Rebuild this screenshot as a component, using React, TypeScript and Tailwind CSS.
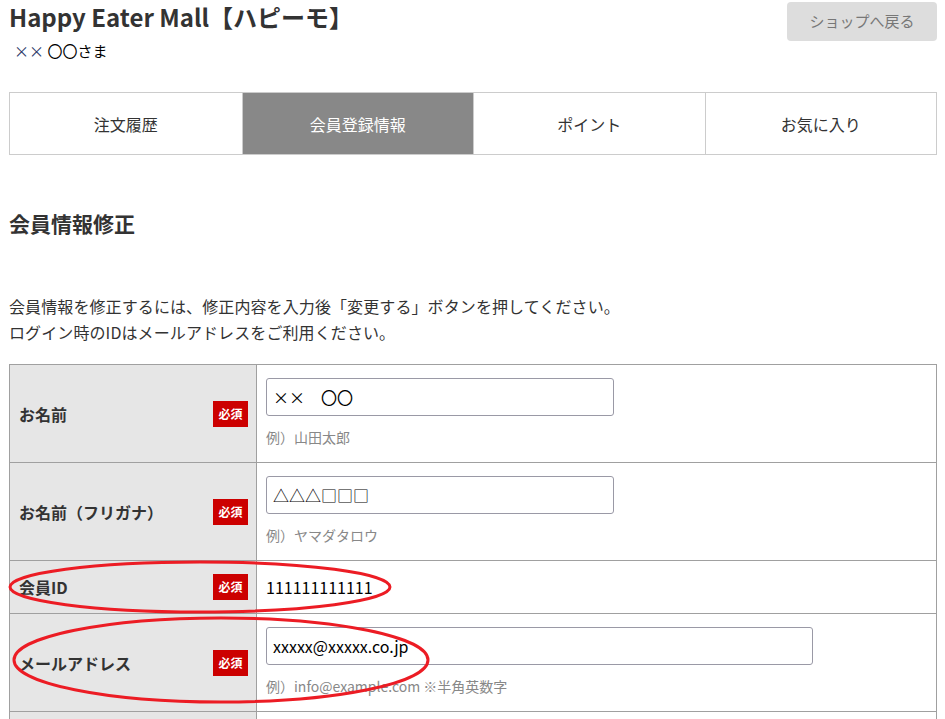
import React from "react";

const jp = "font-['Noto_Sans_CJK_JP',sans-serif]";

const tabs = ["注文履歴", "会員登録情報", "ポイント", "お気に入り"];

const Badge = () => (
  <span className="flex h-[26px] w-[35px] items-center justify-center bg-[#cc0000] text-[12px] text-white">
    必須
  </span>
);

const Label = ({ text }: { text: string }) => (
  <th className="w-[247px] border border-[#a0a0a0] bg-[#e6e6e6] pl-[9px] pr-[8px] text-left align-middle">
    <div className="flex items-center justify-between">
      <span className="text-[16px] font-bold text-[#333]">{text}</span>
      <Badge />
    </div>
  </th>
);

const Field = ({ value, hint, wide }: { value: string; hint: string; wide?: boolean }) => (
  <td className="border border-[#a0a0a0] pl-[9px] pt-[13px] pb-[14px] align-top">
    <div
      className={`flex h-[38px] items-center rounded-[3px] border border-[#9a99a6] px-[6px] text-[16px] text-black ${
        wide ? "w-[547px]" : "w-[348px]"
      }`}
    >
      {value}
    </div>
    <p className="mt-[10px] text-[14px] leading-[22px] text-[#888]">{hint}</p>
  </td>
);

export default function App() {
  return (
    <div className={`relative h-[719px] overflow-hidden bg-white pl-[9px] pr-[8px] text-[#333] ${jp}`}>
      <header className="flex items-start justify-between">
        <div>
          <h1 className="pt-[2px] text-[24px] font-bold leading-[30px] text-[#333]">
            Happy Eater Mall【ハピーモ】
          </h1>
          <p className="mt-[8px] pl-[5px] text-[15px] leading-[22px] text-black">
            <span className="text-[#2b3a67]">××</span> 〇〇さま
          </p>
        </div>
        <button className="mt-[2px] h-[39px] w-[150px] rounded-[4px] bg-[#dddddd] text-[15px] text-[#777]">
          ショップへ戻る
        </button>
      </header>

      <nav className="mt-[30px] grid h-[63px] grid-cols-4 border border-[#cccccc]">
        {tabs.map((t, i) => (
          <div
            key={t}
            className={`flex items-center justify-center text-[16px] ${
              i > 0 ? "border-l border-[#cccccc]" : ""
            } ${i === 1 ? "bg-[#888888] text-white" : "bg-white text-[#333]"}`}
          >
            {t}
          </div>
        ))}
      </nav>

      <h2 className="mt-[53px] text-[21px] font-bold leading-[30px] text-[#333]">会員情報修正</h2>

      <div className="mt-[55px] text-[16px] leading-[26px] tracking-[0.1px] text-[#333]">
        <p>会員情報を修正するには、修正内容を入力後「変更する」ボタンを押してください。</p>
        <p>ログイン時のIDはメールアドレスをご利用ください。</p>
      </div>

      <table className="mt-[19px] w-full border-collapse border border-[#a0a0a0]">
        <tbody>
          <tr className="h-[98px]">
            <Label text="お名前" />
            <Field value="××　〇〇" hint="例）山田太郎" />
          </tr>
          <tr className="h-[98px]">
            <Label text="お名前（フリガナ）" />
            <Field value="△△△□□□" hint="例）ヤマダタロウ" />
          </tr>
          <tr className="h-[53px]">
            <Label text="会員ID" />
            <td className="border border-[#a0a0a0] pl-[9px] align-middle text-[16px] text-black">
              111111111111
            </td>
          </tr>
          <tr className="h-[98px]">
            <Label text="メールアドレス" />
            <Field value="xxxxx@xxxxx.co.jp" hint="例）info@example.com ※半角英数字" wide />
          </tr>
          <tr className="h-[60px]">
            <th className="border border-[#a0a0a0] bg-[#e6e6e6]" />
            <td className="border border-[#a0a0a0]" />
          </tr>
        </tbody>
      </table>

      <svg className="pointer-events-none absolute left-0 top-0" width="945" height="719">
        <ellipse cx="200" cy="587" rx="190" ry="25" fill="none" stroke="#ec1c24" strokeWidth="3" />
        <ellipse cx="221" cy="660" rx="207" ry="42" fill="none" stroke="#ec1c24" strokeWidth="3" />
      </svg>
    </div>
  );
}
